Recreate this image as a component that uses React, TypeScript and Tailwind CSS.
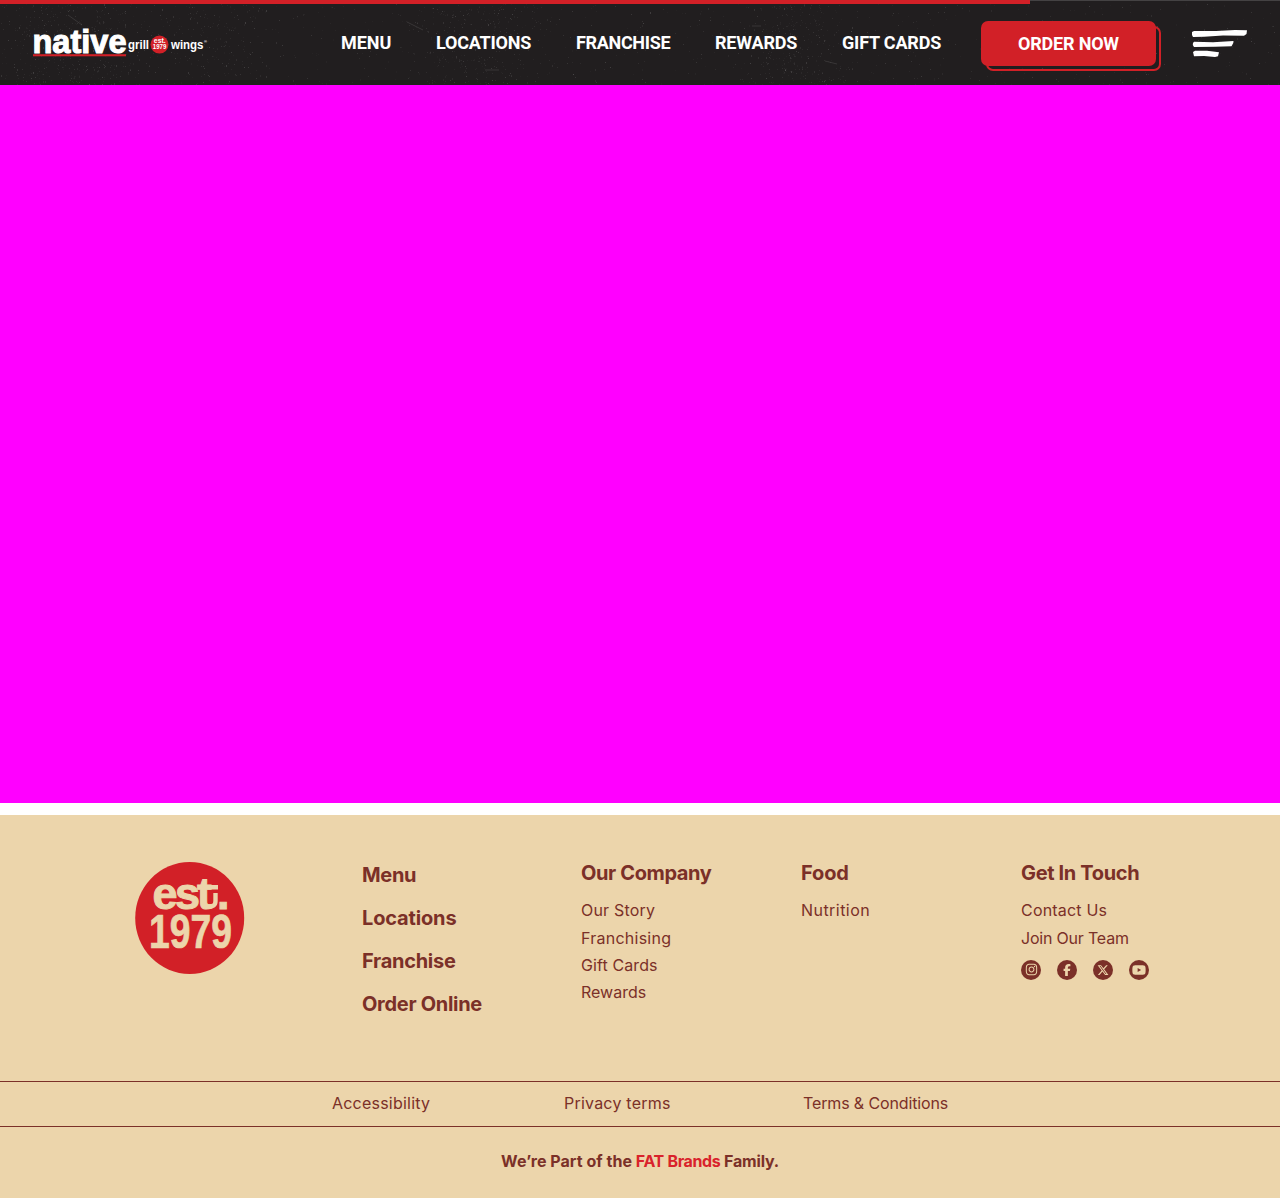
import React from 'react';
import { FaInstagram, FaFacebookF, FaXTwitter, FaYoutube } from 'react-icons/fa6';

type Speck = { x: number; y: number; w: number; h: number; o: number };

function makeSpecks(count: number): Speck[] {
  let seed = 1979;
  const next = () => {
    seed = (seed * 16807) % 2147483647;
    return seed / 2147483647;
  };
  const centers = [30, 75, 110, 215, 450, 500, 785, 800];
  return Array.from({ length: count }, () => {
    const clustered = next() < 0.6;
    const c = centers[Math.floor(next() * centers.length)];
    return {
      x: Math.round(clustered ? c + (next() + next() - 1) * 60 : next() * 1280),
      y: Math.round(4 + next() * 81),
      w: 1,
      h: next() < 0.9 ? 1 : 2,
      o: 0.02 + next() * next() * 0.14,
    };
  });
}

const specks = makeSpecks(2000);

function Grain() {
  return (
    <svg className="absolute inset-0" width="1280" height="85" aria-hidden="true">
      {specks.map((s, i) => (
        <rect key={i} x={s.x} y={s.y} width={s.w} height={s.h} fill="#fff" opacity={s.o} />
      ))}
      <path d="M407 22l16 8M752 26h9M825 61l12 3M485 70h14M68 15l14 10" stroke="#fff" strokeWidth="1" opacity="0.1" />
    </svg>
  );
}

function Logo() {
  return (
    <svg width="184" height="52" viewBox="-3 -10 184 52" fontFamily="'Liberation Sans', sans-serif" fontWeight="700" fill="#fff">
      <text x="-0.5" y="24.5" fontSize="34" textLength="94" lengthAdjust="spacingAndGlyphs" stroke="#fff" strokeWidth="1.1">native</text>
      <rect x="0" y="26.2" width="93" height="2.1" fill="#d22027" />
      <text x="95" y="21" fontSize="12.5" textLength="21" lengthAdjust="spacingAndGlyphs">grill</text>
      <circle cx="126.5" cy="16.6" r="9" fill="#d22027" />
      <text x="120.8" y="15.3" fontSize="7.5" textLength="12" lengthAdjust="spacingAndGlyphs">est.</text>
      <text x="119.8" y="21.4" fontSize="7.5" textLength="13.6" lengthAdjust="spacingAndGlyphs">1979</text>
      <text x="138" y="21" fontSize="12.5" textLength="32.5" lengthAdjust="spacingAndGlyphs">wings</text>
      <text x="171" y="15" fontSize="4">®</text>
    </svg>
  );
}

function Badge() {
  return (
    <svg width="110" height="112" viewBox="0 0 110 112" fontFamily="'Liberation Sans', sans-serif" fontWeight="700" fill="#ecd5ab" stroke="#ecd5ab">
      <ellipse cx="54.7" cy="56" rx="54.5" ry="56" fill="#d22027" stroke="none" />
      <text x="17.5 40 62 82" y="46.5" fontSize="45" strokeWidth="1">est.</text>
      <path d="M70 25.2h13M73 44.6q7.5 0.5 7.5-5.6V31" fill="none" strokeWidth="4.4" />
      <text x="14" y="85.7" fontSize="47.5" textLength="83" lengthAdjust="spacingAndGlyphs" strokeWidth="0.7">1979</text>
    </svg>
  );
}

const nav = [
  { label: 'MENU', cls: 'w-[50px] tracking-[-0.05px]' },
  { label: 'LOCATIONS', cls: 'w-[95px] tracking-[-0.22px]' },
  { label: 'FRANCHISE', cls: 'w-[94px] tracking-[-0.33px]' },
  { label: 'REWARDS', cls: 'w-[82px] tracking-[-0.18px]' },
  { label: 'GIFT CARDS', cls: 'w-[99px] tracking-[-0.18px]' },
];

const mainLinks = [
  { label: 'Menu', cls: 'tracking-[-0.3px]' },
  { label: 'Locations', cls: 'tracking-[-0.15px]' },
  { label: 'Franchise', cls: 'tracking-[-0.28px]' },
  { label: 'Order Online', cls: 'tracking-[-0.3px]' },
];

const socials = [
  { name: 'Instagram', Icon: FaInstagram, cls: 'size-[13px]' },
  { name: 'Facebook', Icon: FaFacebookF, cls: 'size-3' },
  { name: 'X', Icon: FaXTwitter, cls: 'size-3' },
  { name: 'YouTube', Icon: FaYoutube, cls: 'size-[14px]' },
];

type Link = { label: string; cls: string };

function Column({ title, titleCls, links, children }: { title: string; titleCls: string; links: Link[]; children?: React.ReactNode }) {
  return (
    <div className="w-[220px] pt-[43px]">
      <h3 className={`text-[20px] leading-[30px] font-bold ${titleCls}`}>{title}</h3>
      <ul className="mt-[9.4px] text-[16px] leading-[27.3px]">
        {links.map((l) => (
          <li key={l.label} className={l.cls}>
            <a href="#">{l.label}</a>
          </li>
        ))}
      </ul>
      {children}
    </div>
  );
}

export default function App() {
  return (
    <div className="h-[1198px] w-[1280px] overflow-hidden bg-white">
      <header className="relative h-[85px] bg-[#211e1f]">
        <Grain />
        <div className="absolute top-0 left-0 h-px w-full bg-[#444243]" />
        <div className="absolute top-0 left-0 h-1 w-[1030px] bg-[#d22027]" />
        <div className="relative flex h-full items-start">
          <div className="ml-[30px] w-[311px] pt-[17.5px]">
            <Logo />
          </div>
          <nav className="flex gap-[45px] pt-[31px] font-['Roboto',sans-serif] text-[18px] leading-6 font-bold whitespace-nowrap text-white">
            {nav.map((n) => (
              <a key={n.label} href="#" className={n.cls}>
                {n.label}
              </a>
            ))}
          </nav>
          <a href="#" className="relative mt-[21px] ml-10 block h-[45px] w-[175px]">
            <span className="absolute top-[5px] left-[5px] h-[45px] w-[175px] rounded-[7px] border-2 border-[#d22027]" />
            <span className="relative flex h-[45px] items-center justify-center rounded-[7px] bg-[#d22027] font-['Roboto',sans-serif] text-[18px] font-bold tracking-[-0.2px] text-white">
              ORDER NOW
            </span>
          </a>
          <svg className="mt-[29px] ml-[35px]" width="58" height="30" viewBox="0 0 58 30" fill="#fff" aria-label="Open menu">
            <path d="M1 3L3 2 25 2 44 1 56 1.3 55.5 5 53 6.8 32 6.6 13 7.8 2 8 1 6z" />
            <path d="M2 14L3 12.8 22 13.2 42.5 12 42.3 14 40.5 17.2 24 17.8 3 18 1.8 16z" />
            <path d="M2 23L4 21.8 16 21.8 28 23.2 27 27.2 24 28 13 27 3 27.2z" />
          </svg>
        </div>
      </header>
      <main className="h-[718px] bg-[#ff00ff]" />
      <footer className="mt-3 h-[383px] bg-[#ecd5ab] font-['Inter',sans-serif] text-[#7b3028]">
        <div className="flex h-[266px]">
          <div className="w-[362px] pt-[46.5px] pl-[135px]">
            <Badge />
          </div>
          <ul className="w-[219px] pt-[39px] text-[20px] leading-[43px] font-bold">
            {mainLinks.map((l) => (
              <li key={l.label} className={l.cls}>
                <a href="#">{l.label}</a>
              </li>
            ))}
          </ul>
          <Column
            title="Our Company"
            titleCls="tracking-[-0.38px]"
            links={[
              { label: 'Our Story', cls: 'tracking-[0.2px]' },
              { label: 'Franchising', cls: 'tracking-[0.25px]' },
              { label: 'Gift Cards', cls: 'tracking-[0.1px]' },
              { label: 'Rewards', cls: '' },
            ]}
          />
          <Column title="Food" titleCls="tracking-[-0.15px]" links={[{ label: 'Nutrition', cls: 'tracking-[0.45px]' }]} />
          <Column
            title="Get In Touch"
            titleCls="tracking-[-0.35px]"
            links={[
              { label: 'Contact Us', cls: 'tracking-[0.2px]' },
              { label: 'Join Our Team', cls: 'tracking-[-0.2px]' },
            ]}
          >
            <div className="mt-[7.6px] flex gap-4">
              {socials.map(({ name, Icon, cls }) => (
                <a key={name} href="#" aria-label={name} className="flex size-5 items-center justify-center rounded-full bg-[#7b3028] text-[#ecd5ab]">
                  <Icon className={cls} />
                </a>
              ))}
            </div>
          </Column>
        </div>
        <div className="flex h-[46px] border-y border-[#7b3028] pl-[332px] text-[16px] leading-[43px]">
          <a href="#" className="w-[232px] tracking-[0.22px]">Accessibility</a>
          <a href="#" className="w-[239px] tracking-[0.22px]">Privacy terms</a>
          <a href="#" className="tracking-[-0.13px]">Terms &amp; Conditions</a>
        </div>
        <p className="pt-[22px] text-center text-[16px] leading-6 font-bold tracking-[0.04px]">
          We’re Part of the <span className="tracking-[-0.35px] text-[#d9232b]">FAT Brands</span>
          <span className="tracking-[-0.2px]"> Family.</span>
        </p>
      </footer>
    </div>
  );
}
